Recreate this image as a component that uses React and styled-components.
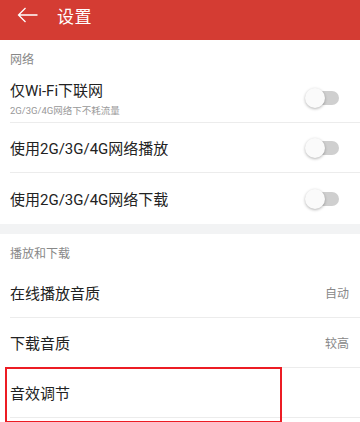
import React from 'react'
import styled, { createGlobalStyle } from 'styled-components'

const Global = createGlobalStyle`
  body {
    margin: 0;
    background: #fff;
    font-family: Roboto, "Noto Sans CJK SC", sans-serif;
  }
`

const Page = styled.div`
  width: 360px;
  height: 422px;
  overflow: hidden;
  background: #fff;
`

const Header = styled.div`
  height: 40px;
  background: #d43c33;
  display: flex;
  align-items: center;
  padding: 0 0 10px 17px;
  box-sizing: border-box;
  color: #fff;
`

const Back = styled.svg`
  width: 21px;
  height: 16px;
  margin-right: 19px;
`

const Title = styled.div`
  font-size: 17px;
  letter-spacing: 0.5px;
`

const SectionLabel = styled.div`
  height: 34px;
  padding: 2px 10px 0;
  box-sizing: border-box;
  display: flex;
  align-items: center;
  font-size: 12px;
  color: #888;
`

const Row = styled.div`
  height: ${p => p.h || 50}px;
  margin-left: 10px;
  padding-right: 11px;
  display: flex;
  align-items: center;
  justify-content: space-between;
  border-bottom: ${p => (p.last ? 'none' : '1px solid #ececec')};
  box-sizing: border-box;
  position: relative;
`

const Texts = styled.div`
  display: flex;
  flex-direction: column;
`

const Main = styled.div`
  font-size: 15px;
  color: #222;
`

const Sub = styled.div`
  font-size: 9.5px;
  color: #999;
  margin-top: 3px;
`

const Value = styled.div`
  font-size: 12px;
  color: #888;
`

const Gap = styled.div`
  height: 10px;
  background: #f2f3f4;
`

const Switch = styled.div`
  width: 34px;
  height: 20px;
  margin-right: 10px;
  position: relative;
  &::before {
    content: '';
    position: absolute;
    left: 6px;
    right: 0;
    top: 3px;
    height: 14px;
    border-radius: 7px;
    background: #cfcfcf;
  }
  &::after {
    content: '';
    position: absolute;
    left: 0;
    top: 0;
    width: 20px;
    height: 20px;
    border-radius: 50%;
    background: #fafafa;
    box-shadow: 0 1px 3px rgba(0, 0, 0, 0.3);
  }
`

const Highlight = styled.div`
  position: absolute;
  left: -5px;
  top: -1px;
  width: 277px;
  height: 56px;
  border: 2.5px solid #ec1c24;
  box-sizing: border-box;
`

export default function App() {
  return (
    <Page>
      <Global />
      <Header>
        <Back viewBox="0 0 21 16" fill="none" stroke="#fff" strokeWidth="1.3">
          <path d="M20.5 8H1.5M8.5 1L1.5 8l7 7" />
        </Back>
        <Title>设置</Title>
      </Header>
      <SectionLabel>网络</SectionLabel>
      <Row h={49}>
        <Texts>
          <Main>仅Wi-Fi下联网</Main>
          <Sub>2G/3G/4G网络下不耗流量</Sub>
        </Texts>
        <Switch />
      </Row>
      <Row>
        <Main>使用2G/3G/4G网络播放</Main>
        <Switch />
      </Row>
      <Row last h={51}>
        <Main>使用2G/3G/4G网络下载</Main>
        <Switch />
      </Row>
      <Gap />
      <SectionLabel>播放和下载</SectionLabel>
      <Row>
        <Main>在线播放音质</Main>
        <Value>自动</Value>
      </Row>
      <Row>
        <Main>下载音质</Main>
        <Value>较高</Value>
      </Row>
      <Row>
        <Main>音效调节</Main>
        <Highlight />
      </Row>
    </Page>
  )
}
